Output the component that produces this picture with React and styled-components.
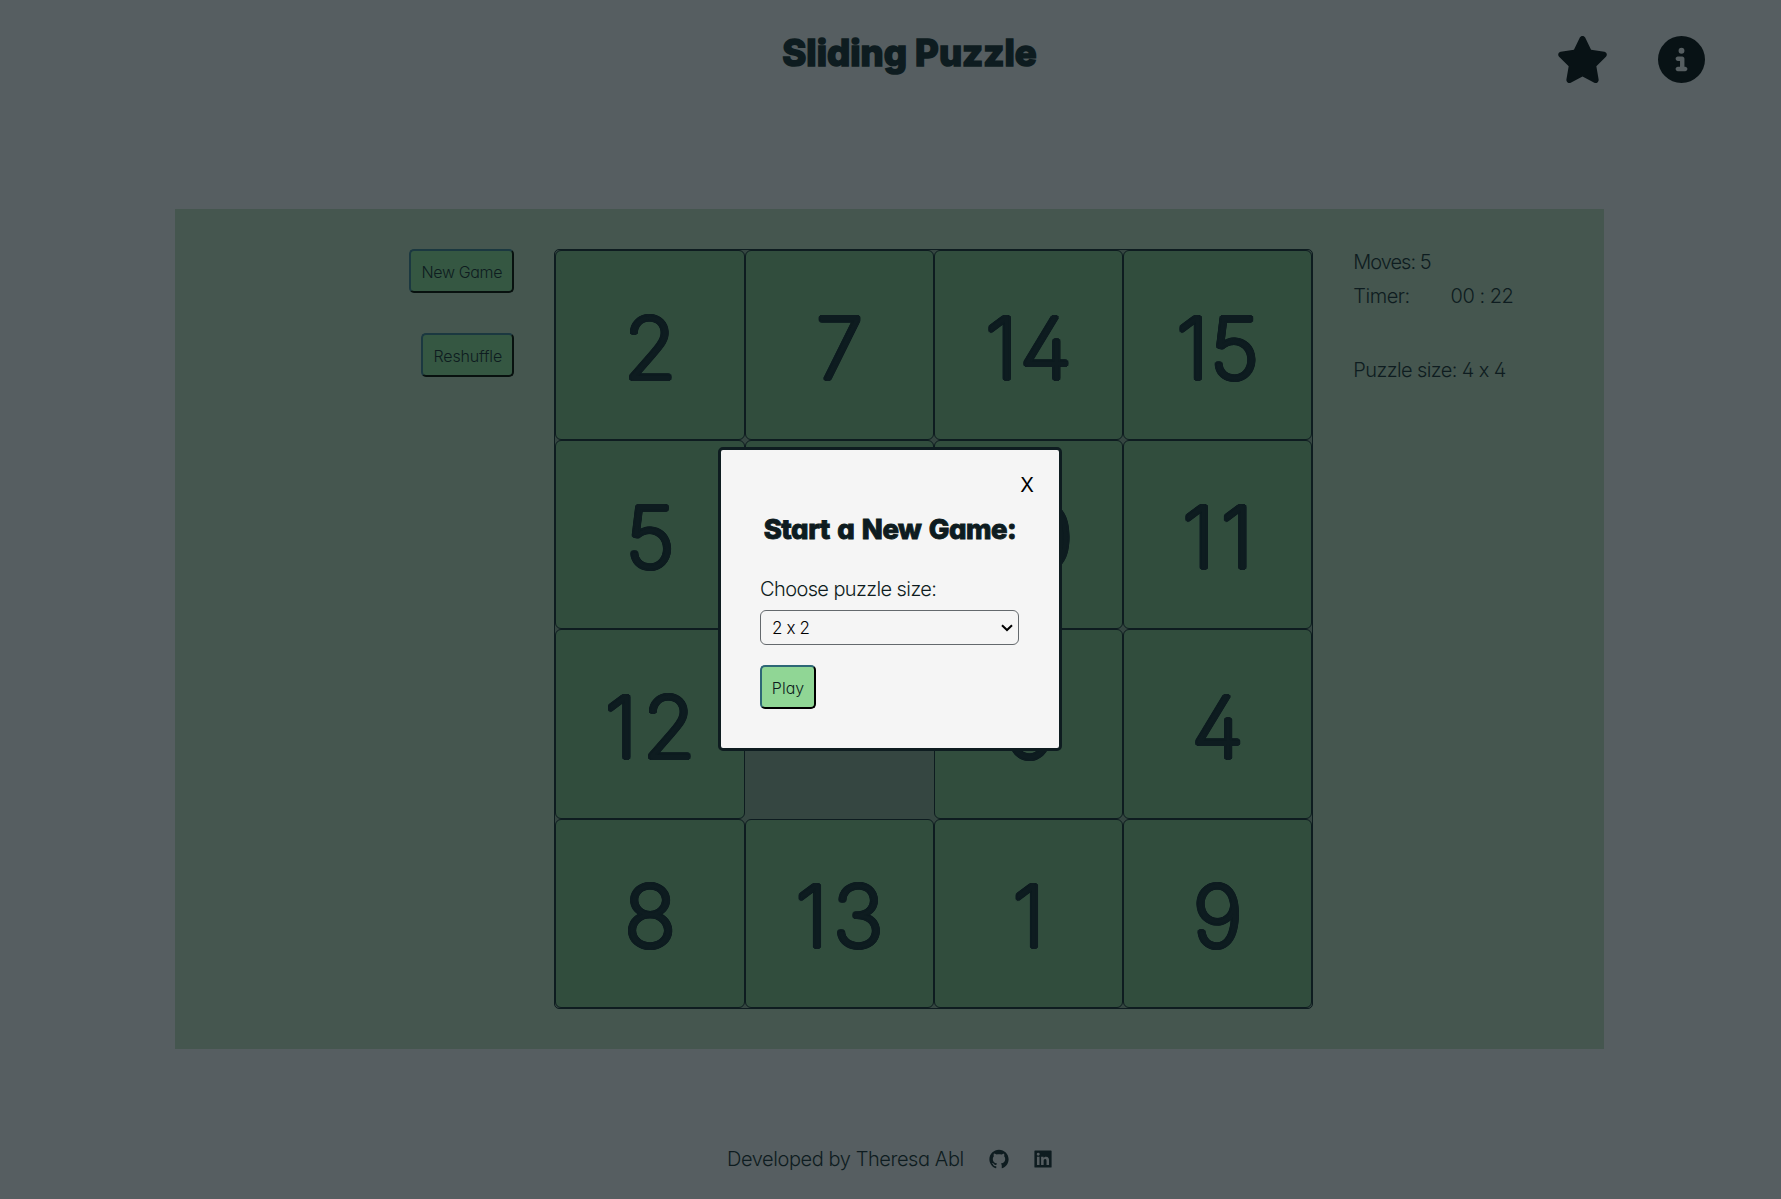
import React from 'react';
import styled, { createGlobalStyle } from 'styled-components';
import { FaStar, FaCircleInfo } from 'react-icons/fa6';
import { AiFillGithub, AiFillLinkedin } from 'react-icons/ai';

const ink = '#0e1c20';

// A ring of hard shadows thickens the glyphs and rounds their corners.
const ring = (radius, steps = 16) =>
  Array.from({ length: steps }, (_, i) => {
    const a = (i / steps) * Math.PI * 2;
    return `${(Math.cos(a) * radius).toFixed(2)}px ${(Math.sin(a) * radius).toFixed(2)}px 0 ${ink}`;
  }).join(', ');

const GlobalStyle = createGlobalStyle`
  * { box-sizing: border-box; }
  body {
    margin: 0;
    background: #565e61;
    color: ${ink};
    font: 300 20px/30px Inter, "Liberation Sans", sans-serif;
    font-feature-settings: "cv11", "cv02", "calt" 0;
    overflow: hidden;
  }
`;

const Page = styled.div`
  height: 1199px;
  display: flex;
  flex-direction: column;
`;

const Header = styled.header`
  height: 209.4px;
  flex: none;
  display: grid;
  grid-template-columns: 1fr auto 1fr;
  padding: 30px 76px 0 114px;
`;

const Title = styled.h1`
  grid-column: 2;
  margin: 0;
  font-size: 36.5px;
  line-height: 46px;
  font-weight: 800;
  white-space: nowrap;
  letter-spacing: 0;
  -webkit-text-stroke: 1.5px ${ink};
`;

const HeaderIcons = styled.nav`
  display: flex;
  justify-content: flex-end;
  align-items: center;
  gap: 49px;
  height: 58px;
  color: #081215;
  svg { display: block; }
`;

const Panel = styled.main`
  width: 1429px;
  height: 839.6px;
  flex: none;
  margin-left: 175.3px;
  padding: 40px;
  background: #45564f;
  display: grid;
  grid-template-columns: 299px 759px 1fr;
  column-gap: 40px;
  align-items: start;
`;

const Controls = styled.div`
  display: flex;
  flex-direction: column;
  align-items: flex-end;
  gap: 40px;
`;

const Button = styled.button`
  width: ${p => p.$width}px;
  height: 44px;
  padding: 1px 0 0;
  border: 2px solid;
  border-color: ${p => p.$bright ? '#2d6776 #000 #000 #2d6776' : '#1b3840 #08110f #08110f #1b3840'};
  border-radius: 5px;
  background: ${p => p.$bright ? '#90d695' : '#355742'};
  color: ${ink};
  font: 300 16px/20px Inter, "Liberation Sans", sans-serif;
  font-feature-settings: inherit;
  letter-spacing: ${p => p.$spacing || 0}px;
`;

const Board = styled.div`
  display: grid;
  grid-template-columns: 189.7px repeat(3, 189.1px);
  grid-auto-rows: 189.45px;
  border: 1px solid ${ink};
  border-radius: 5px;
  background: #354641;
`;

const Tile = styled.div`
  display: flex;
  align-items: center;
  justify-content: center;
  border: ${p => p.$empty ? 0 : 1}px solid ${ink};
  border-radius: 6px;
  background: ${p => p.$empty ? 'transparent' : '#314d3d'};
  font-size: 85.5px;
  font-weight: 200;
  line-height: 1;
  padding: 7px 0 0 ${p => p.$spacing}px;
  letter-spacing: ${p => p.$spacing}px;
  text-shadow: ${ring(2.1)}, ${ring(1.1)};
`;

const Stats = styled.div`
  padding-top: 0.6px;
  white-space: nowrap;
`;

const Stat = styled.div`
  height: 34px;
  line-height: 24px;
  display: flex;
  gap: 41px;
  margin-bottom: ${p => p.$spaced ? 40 : 0}px;
  letter-spacing: ${p => p.$spacing}px;
`;

const Footer = styled.footer`
  flex: 1;
  display: flex;
  align-items: flex-start;
  padding: 95px 0 0 727px;
  white-space: nowrap;
`;

const Credit = styled.span`
  width: 261px;
  letter-spacing: -0.42px;
`;

const Social = styled.span`
  display: block;
  width: 44px;
  padding-top: 4px;
  svg { display: block; }
`;

const Backdrop = styled.div`
  position: fixed;
  inset: 0 1px 1px 0;
  display: flex;
  align-items: center;
  justify-content: center;
`;

const Dialog = styled.section`
  width: 344px;
  height: 304px;
  border: 3px solid ${ink};
  border-radius: 5px;
  background: #f5f5f5;
  padding: 22px 39px 0;
`;

const Close = styled.button`
  display: block;
  margin: 0 -20px 0 auto;
  width: 26px;
  height: 26px;
  padding: 0;
  border: 0;
  background: none;
  color: #000;
  font: 400 20px/26px Inter, "Liberation Sans", sans-serif;
`;

const DialogTitle = styled.h2`
  margin: 14px 0 0;
  height: 34px;
  font-size: 27.5px;
  line-height: 34px;
  font-weight: 800;
  text-align: center;
  white-space: nowrap;
  letter-spacing: -0.5px;
  word-spacing: 2px;
  -webkit-text-stroke: 0.9px ${ink};
`;

const Label = styled.label`
  display: block;
  margin-top: 28px;
  height: 36px;
  line-height: 30px;
  letter-spacing: -0.6px;
`;

const SelectBox = styled.div`
  width: 259px;
  height: 35px;
  display: flex;
  align-items: center;
  justify-content: space-between;
  padding: 0 5px 0 11px;
  border: 1px solid #64696d;
  border-radius: 6px;
  color: #000;
  font-size: 17px;
  font-weight: 350;
  letter-spacing: -0.4px;
  margin-bottom: 20px;
`;

const tiles = [2, 7, 14, 15, 5, 3, 10, 11, 12, null, 6, 4, 8, 13, 1, 9];

// Optical kerning of the two-digit numbers.
const kerning = { 10: 5, 11: 6, 12: 5.5, 13: 5, 14: 2, 15: 1 };

export default function App() {
  return (
    <>
      <GlobalStyle />
      <Page>
        <Header>
          <Title>Sliding Puzzle</Title>
          <HeaderIcons>
            <FaStar size={53} />
            <FaCircleInfo size={47} />
          </HeaderIcons>
        </Header>
        <Panel>
          <Controls>
            <Button $width={105} $spacing={-0.35}>New Game</Button>
            <Button $width={93} $spacing={-0.15}>Reshuffle</Button>
          </Controls>
          <Board>
            {tiles.map((n, i) => (
              <Tile key={i} $empty={n === null} $spacing={kerning[n] || 0}>{n}</Tile>
            ))}
          </Board>
          <Stats>
            <Stat $spacing={-1}>Moves: 5</Stat>
            <Stat $spaced $spacing={-0.5}><span>Timer:</span><span>00 : 22</span></Stat>
            <Stat $spacing={-0.6}>Puzzle size: 4 x 4</Stat>
          </Stats>
        </Panel>
        <Footer>
          <Credit>Developed by Theresa Abl</Credit>
          <Social><AiFillGithub size={22} /></Social>
          <Social><AiFillLinkedin size={22} /></Social>
        </Footer>
      </Page>
      <Backdrop>
        <Dialog>
          <Close>X</Close>
          <DialogTitle>Start a New Game:</DialogTitle>
          <Label>Choose puzzle size:</Label>
          <SelectBox>
            2 x 2
            <svg width="12" height="8" viewBox="0 0 12 8" fill="none" stroke="#000" strokeWidth="2">
              <path d="M1 1.2 6 6l5-4.8" />
            </svg>
          </SelectBox>
          <Button $bright $width={56}>Play</Button>
        </Dialog>
      </Backdrop>
    </>
  );
}
